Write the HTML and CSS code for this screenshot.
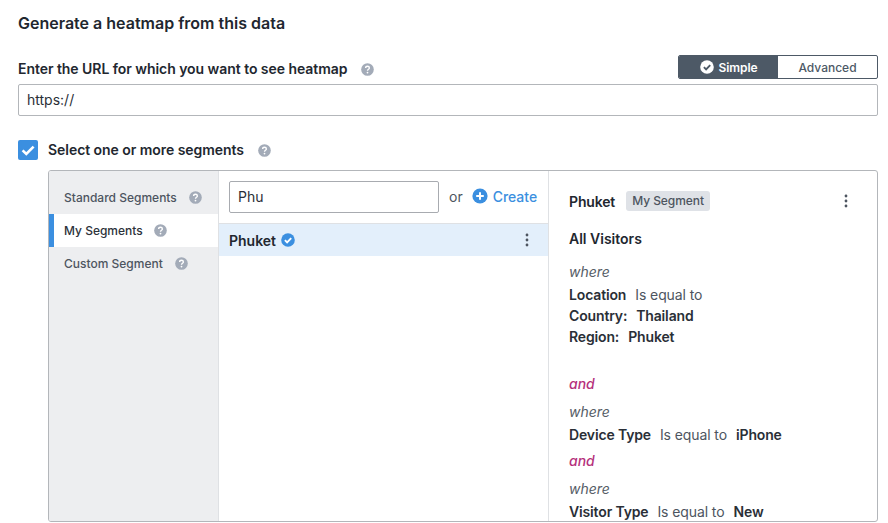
FILE: index.html
```html
<!DOCTYPE html>
<html lang="en">
<head>
<meta charset="utf-8">
<title>Generate a heatmap</title>
<link rel="stylesheet" href="styles.css">
</head>
<body>
<svg class="defs" width="0" height="0" aria-hidden="true">
  <symbol id="help" viewBox="0 0 14 14"><circle cx="7" cy="7" r="6.8" fill="#a3abb8"/><path d="M5 5.4c0-1.2.9-1.9 2-1.9s2 .7 2 1.8c0 1.5-2 1.5-2 3" fill="none" stroke="#fff" stroke-width="1.5"/><circle cx="7" cy="10.3" r=".95" fill="#fff"/></symbol>
  <symbol id="check" viewBox="0 0 14 14"><circle cx="7" cy="7" r="6.8" fill="currentColor"/><path d="M3.9 7.2 6.1 9.4 10.2 5.2" fill="none" stroke="var(--tick)" stroke-width="1.9"/></symbol>
  <symbol id="dots" viewBox="0 0 4 14"><circle cx="2" cy="2" r="1.4"/><circle cx="2" cy="7" r="1.4"/><circle cx="2" cy="12" r="1.4"/></symbol>
</svg>
<main class="page">
  <h1 class="title">Generate a heatmap from this data</h1>
  <div class="url-head">
    <label class="label">Enter the URL for which you want to see heatmap<svg class="help help-url"><use href="#help"/></svg></label>
    <div class="toggle">
      <span class="toggle-item on"><svg class="toggle-check"><use href="#check"/></svg>Simple</span>
      <span class="toggle-item">Advanced</span>
    </div>
  </div>
  <div class="url-input">https://</div>
  <div class="segment-check">
    <span class="checkbox"><svg viewBox="0 0 20 20" width="20" height="20"><path d="M4.6 10.4 8.3 14 15.6 6.6" fill="none" stroke="#fff" stroke-width="2.6"/></svg></span>
    <span class="label">Select one or more segments</span><svg class="help help-seg"><use href="#help"/></svg>
  </div>
  <section class="panel">
    <nav class="side">
      <div class="side-item">Standard Segments<svg class="help help-a"><use href="#help"/></svg></div>
      <div class="side-item active">My Segments<svg class="help help-b"><use href="#help"/></svg></div>
      <div class="side-item">Custom Segment<svg class="help help-c"><use href="#help"/></svg></div>
    </nav>
    <div class="middle">
      <div class="search-row">
        <div class="search">Phu</div>
        <span class="or">or</span>
        <span class="create"><svg class="plus" viewBox="0 0 16 16"><circle cx="8" cy="8" r="7.6" fill="#3b8fe0"/><path d="M8 4.2v7.6M4.2 8h7.6" stroke="#fff" stroke-width="2"/></svg>Create</span>
      </div>
      <div class="result">
        <span class="result-name">Phuket</span><svg class="verified"><use href="#check"/></svg>
        <svg class="dots dots-row"><use href="#dots"/></svg>
      </div>
    </div>
    <div class="detail">
      <div class="detail-head">
        <strong class="strong">Phuket</strong><span class="tag">My Segment</span>
        <svg class="dots dots-head"><use href="#dots"/></svg>
      </div>
      <div class="visitors">All Visitors</div>
      <div class="line where w1">where</div>
      <div class="line l1"><b>Location</b><span class="muted">Is equal to</span></div>
      <div class="line l2"><b>Country:</b><b class="val">Thailand</b></div>
      <div class="line l2"><b>Region:</b><b class="val">Phuket</b></div>
      <div class="line and a1">and</div>
      <div class="line where w2">where</div>
      <div class="line l1"><b>Device Type</b><span class="muted">Is equal to</span><b class="val">iPhone</b></div>
      <div class="line and a2">and</div>
      <div class="line where w2">where</div>
      <div class="line l1"><b>Visitor Type</b><span class="muted">Is equal to</span><b class="val">New</b></div>
    </div>
  </section>
</main>
</body>
</html>
```
FILE: styles.css
```css
* { box-sizing: border-box; }
html, body { margin: 0; height: 100%; overflow: hidden; background: #fff; }
body { font-family: Inter, "Liberation Sans", sans-serif; color: #22272f; font-size: 14px; }
.defs { position: absolute; }
.page { padding: 14px 10px 0 18px; }
.title { margin: 0; font-size: 16px; line-height: 18px; font-weight: 600; }
.url-head { display: flex; justify-content: space-between; margin-top: 23px; height: 24px; }
.label { font-size: 14px; font-weight: 600; letter-spacing: -0.05px; line-height: 20px; display: flex; align-items: center; height: 20px; }
.url-head .label { margin-top: 4px; }
.help { width: 13px; height: 13px; flex: none; }
.help-url { margin-left: 14px; }
.toggle { display: flex; width: 200px; height: 24px; border: 1px solid #4d5966; border-radius: 2px; overflow: hidden; font-size: 12px; font-weight: 500; color: #4d5966; }
.toggle-item { flex: 1; display: flex; align-items: center; justify-content: center; }
.toggle-item.on { background: #4d5966; color: #fff; font-weight: 600; letter-spacing: -0.1px; }
.toggle-check { width: 14px; height: 14px; margin-right: 5px; color: #fff; --tick: #4d5966; }
.url-input { margin-top: 5px; height: 32px; border: 1px solid #b3b6ba; border-radius: 2px; padding-left: 8px; line-height: 30px; font-size: 14px; color: #2a2f37; }
.segment-check { display: flex; align-items: center; margin-top: 24px; height: 20px; }
.checkbox { width: 20px; height: 20px; border-radius: 2px; background: #3b8fe0; margin-right: 10px; display: block; }
.checkbox svg { display: block; }
.help-seg { margin-left: 14px; }
.panel { display: flex; margin: 10px 0 0 30px; height: 352px; border: 1px solid #b3b6ba; border-radius: 3px; overflow: hidden; }
.side { width: 170px; flex: none; background: #edeef0; border-right: 1px solid #dfe1e4; padding-top: 10px; font-size: 12px; font-weight: 500; color: #4d5560; }
.side-item { height: 33px; padding-left: 15px; display: flex; align-items: center; }
.side-item.active { background: #fff; border-left: 5px solid #3b8fe0; padding-left: 10px; color: #2c323a; }
.help-a { margin-left: 12px; }
.help-b { margin-left: 11px; }
.help-c { margin-left: 12px; }
.middle { width: 330px; flex: none; border-right: 1px solid #dfe1e4; }
.search-row { display: flex; align-items: center; height: 53px; padding: 0 10px; border-bottom: 1px solid #dfe1e4; }
.search { width: 210px; height: 32px; border: 1px solid #a8abb0; border-radius: 2px; padding-left: 8px; line-height: 30px; font-size: 14px; color: #2a2f37; }
.or { margin: 0 0 2px 10px; font-size: 14px; color: #4d5560; }
.create { margin: 0 0 2px 9px; display: flex; align-items: center; font-size: 14px; font-weight: 500; letter-spacing: -0.03px; color: #3b8fe0; }
.plus { width: 16px; height: 16px; margin-right: 5px; }
.result { display: flex; align-items: center; height: 32px; padding: 0 19px 0 10px; background: #e3effb; }
.result-name { font-size: 14px; font-weight: 600; }
.verified { width: 14px; height: 14px; margin-left: 5px; color: #3b8fe0; --tick: #fff; }
.dots { fill: #4d5560; width: 4px; height: 14px; flex: none; margin-left: auto; }
.detail { flex: 1; min-width: 0; padding: 0 29px 0 20px; font-size: 14px; }
.detail-head { display: flex; align-items: center; height: 20px; margin-top: 20px; }
.strong { font-weight: 600; font-size: 14px; letter-spacing: -0.15px; }
.tag { margin-left: 11px; background: #dfe2e7; border-radius: 3px; height: 20px; padding: 0 6px; font-size: 12px; font-weight: 500; line-height: 19px; color: #4d5560; letter-spacing: -0.05px; }
.visitors { margin-top: 18px; font-weight: 600; line-height: 20px; }
.line { line-height: 21px; }
.line b { font-weight: 600; color: #2a2f37; letter-spacing: -0.15px; }
.muted { color: #4d5560; margin-left: 9px; letter-spacing: -0.1px; }
.line .val { margin-left: 9px; }
.where { font-style: italic; color: #565d67; }
.w1 { margin-top: 12px; }
.w2 { margin-top: 7px; }
.l1 { margin-top: 2px; }
.and { font-style: italic; font-weight: 500; color: #b5317c; }
.a1 { margin-top: 26px; }
.a2 { margin-top: 5px; }
```
